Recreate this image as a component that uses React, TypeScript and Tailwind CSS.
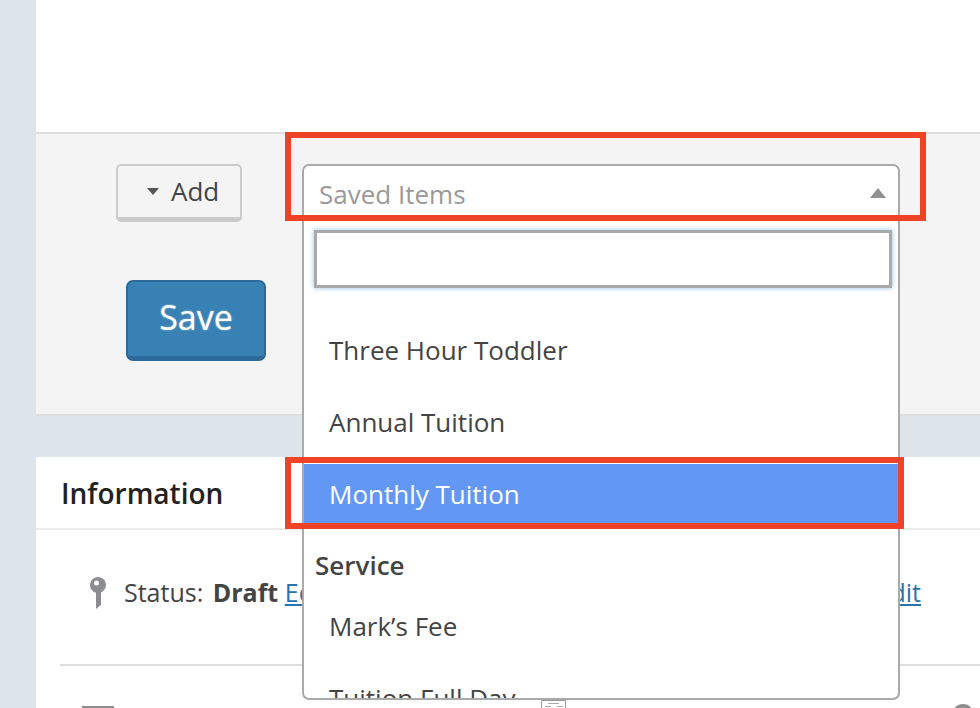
const font = { fontFamily: '"Open Sans", "Noto Sans", sans-serif' };

function Pin() {
  return (
    <svg width="16" height="32" viewBox="0 0 16 32" className="shrink-0">
      <path fillRule="evenodd" fill="#8b8d91" d="M8 0a8 8 0 0 1 3 15.400V28l-5 4V15.750A8 8 0 0 1 8 0ZM6.500 3.500a2.500 2.500 0 1 0 0 5 2.500 2.500 0 0 0 0-5Z" />
    </svg>
  );
}

function MiniIcon() {
  return (
    <svg width="25" height="8" viewBox="0 0 25 8" className="absolute top-[700px] left-[541px]">
      <path fill="none" stroke="#999" strokeWidth="1" d="M.500 8V.500h24V8" />
      <path fill="none" stroke="#aaa" strokeWidth="1" d="M7 3.500h11M4 6.500h6M16 6.500h6" />
    </svg>
  );
}

export default function App() {
  return (
    <div style={font} className="relative h-[708px] w-[980px] overflow-hidden bg-[#dde5eb]">
      <div className="ml-9 flex h-full flex-col">
        <div className="h-[132px] shrink-0 bg-white" />
        <div className="h-[284px] shrink-0 border-y-2 border-[#dedede] bg-[#f4f4f4]">
          <div className="ml-20 mt-[30px] flex h-[58px] w-[126px] items-center gap-[12px] rounded-[5px] border-2 border-b-[5px] border-[#cbcbcb] pl-[29px] text-[26px] text-[#444]">
            <span className="h-0 w-0 border-x-[6px] border-t-[7px] border-x-transparent border-t-[#555]" />
            <span>Add</span>
          </div>
          <button className="ml-[90px] mt-[58px] flex h-[81px] w-[140px] items-center justify-center rounded-[7px] border-2 border-b-[5px] border-[#2d6a99] bg-[#3781b4] pb-[4px] text-[34px] text-white [text-shadow:0_0_2px_rgba(255,255,255,0.6)]">
            Save
          </button>
        </div>
        <div className="h-[41px] shrink-0" />
        <div className="flex-1 bg-white">
          <div className="flex h-[73px] items-center border-b-2 border-[#ececec] pl-[25px] text-[28px] font-semibold text-[#222]">
            Information
          </div>
          <div className="ml-[24px] flex h-[136px] items-center gap-[18px] border-b-2 border-[#dedede] pl-[30px] pr-[59px] pb-[8px] text-[25px] text-[#444]">
            <Pin />
            <span>
              Status: <b className="ml-[3px] font-bold">Draft</b> <span className="text-[#2a73ad] underline">Edit</span>
            </span>
            <span className="ml-auto text-[#2a73ad] underline">Edit</span>
          </div>
        </div>
      </div>

      <div className="absolute top-[706px] left-[82px] h-[2px] w-8 bg-[#8d8d8d]" />
      <MiniIcon />
      <div className="absolute top-[704px] left-[952px] h-6 w-[22px] rounded-full border-[4px] border-[#8d8d8d]" />

      <div className="absolute top-[164px] left-[302px] h-[536px] w-[598px] overflow-hidden rounded-[7px] border-2 border-[#aaa] bg-white text-[#444]">
        <div className="flex h-[52px] items-center justify-between pl-[15px] pr-[12px] pt-[4px] text-[26px] text-[#999]">
          <span>Saved Items</span>
          <span className="mb-[2px] h-0 w-0 border-x-[8px] border-b-[10px] border-x-transparent border-b-[#919191]" />
        </div>
        <div className="ml-[10px] mt-[12px] h-[58px] w-[578px] border-[3px] border-[#aaa] bg-white shadow-[0_0_5px_#8fbfe6]" />
        <ul className="mt-[26px] text-[26px]">
          <li className="flex h-[72px] items-center pl-[25px]">Three Hour Toddler</li>
          <li className="flex h-[72px] items-center pl-[25px]">Annual Tuition</li>
          <li className="flex h-[71px] items-center bg-[#6298f3] pl-[25px] pt-[1px] text-white shadow-[inset_0_6px_0_#fff]">Monthly Tuition</li>
          <li className="h-[61px] pl-[11px] pt-[17px] font-semibold">Service</li>
          <li className="flex h-[72px] items-center pl-[25px]">Mark’s Fee</li>
          <li className="flex h-[72px] items-center pl-[25px]">Tuition Full Day</li>
        </ul>
      </div>

      <div className="absolute top-[132px] left-[285px] h-[89px] w-[641px] border-[6px] border-[#ef4327]" />
      <div className="absolute top-[457px] left-[285px] h-[72px] w-[619px] border-[6px] border-[#ef4327]" />
    </div>
  );
}
